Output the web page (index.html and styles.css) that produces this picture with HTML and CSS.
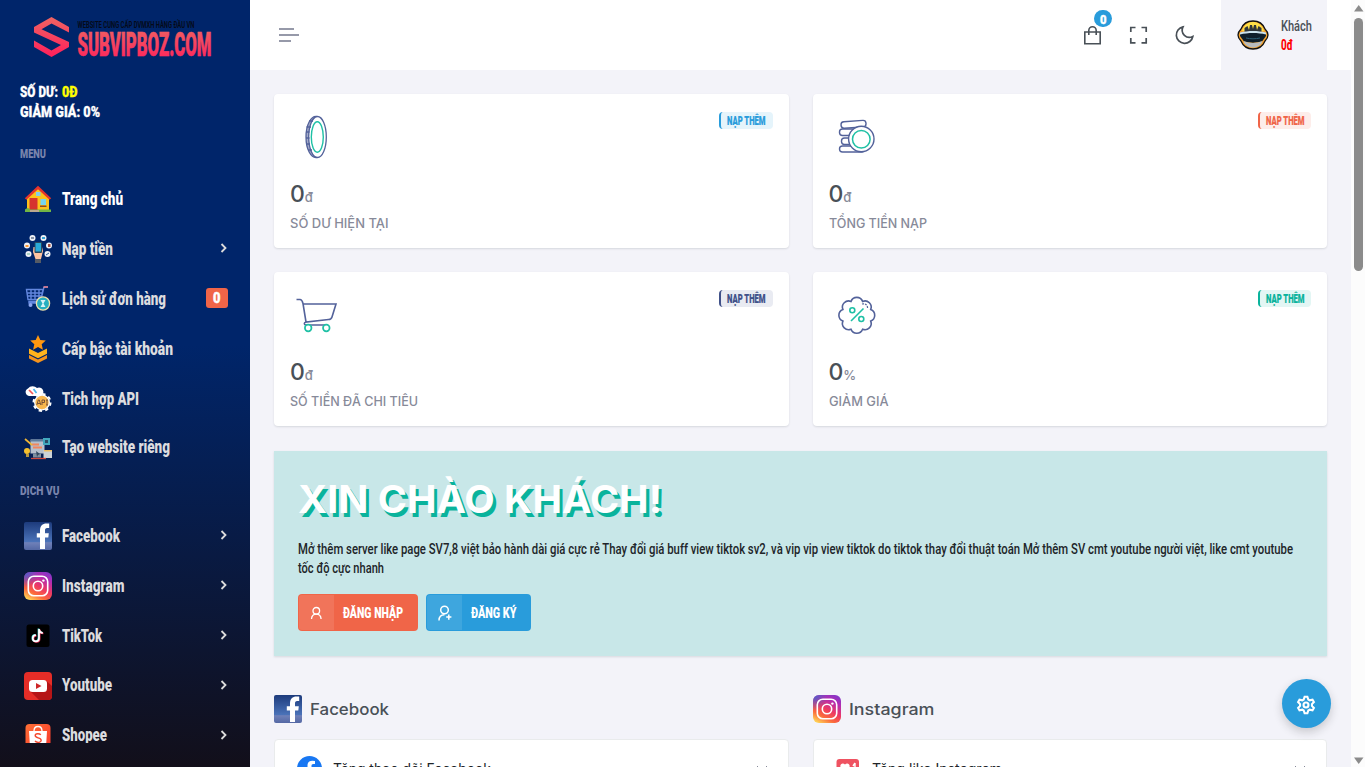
FILE: index.html
```html
<!DOCTYPE html>
<html lang="vi">
<head>
<meta charset="utf-8">
<title>SUBVIPBOZ.COM</title>
<link rel="stylesheet" href="styles.css">
</head>
<body>
<svg class="defs" width="0" height="0">
  <defs>
    <linearGradient id="red" x1="0" y1="0" x2="0" y2="1"><stop offset="0" stop-color="#ee6462"/><stop offset="1" stop-color="#ff1f5b"/></linearGradient>
    <linearGradient id="fbg" x1="0" y1="0" x2="0" y2="1"><stop offset="0" stop-color="#1d3b7c"/><stop offset=".7" stop-color="#4a72b8"/><stop offset=".74" stop-color="#6f80b8"/><stop offset="1" stop-color="#5468a4"/></linearGradient>
    <linearGradient id="igg" x1=".2" y1="1" x2=".75" y2="0"><stop offset="0" stop-color="#ffd155"/><stop offset=".25" stop-color="#fb6a3c"/><stop offset=".5" stop-color="#ee3a62"/><stop offset=".8" stop-color="#b52cb0"/><stop offset="1" stop-color="#8a35c6"/></linearGradient>
    <radialGradient id="igb" cx="0" cy="0" r=".55"><stop offset="0" stop-color="#3e62d8"/><stop offset="1" stop-color="#3e62d8" stop-opacity="0"/></radialGradient>
    <linearGradient id="shp" x1="0" y1="0" x2="1" y2="1"><stop offset="0" stop-color="#ff7035"/><stop offset="1" stop-color="#f8362c"/></linearGradient>
    <symbol id="fb" viewBox="0 0 28 28"><rect width="28" height="28" rx="2" fill="url(#fbg)"/><path d="M16 27V15.500h-3.200v-4.200H16V8.500C16 4 18.500 1.500 22.500 1.500h2.700v4.400h-2c-1.800 0-2.200.9-2.200 2.400v3h3.800l-.5 4.200H21V27z" fill="#fff"/></symbol>
    <symbol id="ig" viewBox="0 0 28 28"><rect width="28" height="28" rx="6" fill="url(#igg)"/><rect width="28" height="28" rx="6" fill="url(#igb)"/><g fill="none" stroke="#fff" stroke-width="1.600"><rect x="4.300" y="4.300" width="19.400" height="19.400" rx="5.500"/><circle cx="14" cy="14" r="4.700"/></g><circle cx="19.400" cy="8.600" r="1.200" fill="#fff"/></symbol>
    <symbol id="next" viewBox="0 0 8 10"><path d="M1.500 1l4 4-4 4" fill="none" stroke="#dcdcdc" stroke-width="1.800"/></symbol>
  </defs>
</svg>
<div class="app">
  <aside class="sidebar">
    <a class="logo">
      <svg width="180" height="42" viewBox="0 0 180 42">
        <path d="M18.500 1L36 11v5.500L18.500 7.500 8.500 13.200 36 26v5L18.500 41 1 31v-6.500l17.500 10 9.500-5.500L1 16.500V11z" fill="url(#red)"/>
        <text class="tagline" x="44.500" y="11.500" textLength="117" lengthAdjust="spacingAndGlyphs">WEBSITE CUNG CẤP DVMXH HÀNG ĐẦU VN</text>
        <text class="brand" x="44.500" y="39.500" textLength="134" lengthAdjust="spacingAndGlyphs" fill="url(#red)">SUBVIPBOZ.COM</text>
      </svg>
    </a>
    <div class="account">
      <svg class="line" width="90" height="20"><text y="15" textLength="38" lengthAdjust="spacingAndGlyphs">SỐ DƯ:</text><text class="yellow" x="42" y="15" textLength="15.500" lengthAdjust="spacingAndGlyphs">0Đ</text></svg>
      <svg class="line" width="90" height="20"><text y="15" textLength="80" lengthAdjust="spacingAndGlyphs">GIẢM GIÁ: 0%</text></svg>
    </div>
    <nav class="menu">
      <div class="title"><svg width="60" height="16"><text y="12" textLength="26" lengthAdjust="spacingAndGlyphs">MENU</text></svg></div>
      <a class="item active">
        <svg class="icon" viewBox="0 0 28 28"><path d="M3 12L14 2.500 25 12v13H3z" fill="#fdc21c"/><path d="M.8 13.200L14 .8l13.200 12.400-1.700 1.500L14 4.300 2.500 14.700z" fill="#e5342d"/><rect x="5.500" y="13" width="8" height="12" fill="#d6322e"/><rect x="16.500" y="14" width="5.500" height="6" fill="#77d4ed"/><path d="M16 20.500h6.500v1.500H16z" fill="#8b4b25"/><path d="M12 7h4.500v4H12z" fill="#83cbe8"/><path d="M1 24.500q3-3 5 0h21V27H1z" fill="#72b544"/><path d="M6 25h9v2H6z" fill="#bba88e"/></svg>
        <svg class="label" width="62" height="24"><text y="17.500" textLength="61" lengthAdjust="spacingAndGlyphs">Trang chủ</text></svg>
      </a>
      <a class="item">
        <svg class="icon" viewBox="0 0 28 28"><g fill="#eef1f6"><circle cx="8.500" cy="3" r="3"/><circle cx="19.500" cy="3" r="3"/><circle cx="3" cy="10.500" r="3"/><circle cx="25" cy="10.500" r="3"/><circle cx="4.500" cy="19" r="3"/><circle cx="23.500" cy="19" r="3"/></g><path d="M7 2h3v2H7z" fill="#8794a8"/><path d="M18 2h3v2h-3z" fill="#36a5d8"/><path d="M1.500 10h3v2h-3z" fill="#ff9830"/><path d="M24 9h2.500v3H24z" fill="#a64c3e"/><path d="M3 19h3" stroke="#67b48f"/><path d="M22 20l3-2" stroke="#275a9c"/><path d="M9.500 12l-.5 5 2.500 7h5.500l2-8-1-4z" fill="#ffc4a2"/><rect x="10.500" y="7" width="7.500" height="11" rx="1" fill="#29495e"/><rect x="11.500" y="8" width="5.500" height="8.500" fill="#28aad9"/><path d="M11 24h6v4h-6z" fill="#555b65"/></svg>
        <svg class="label" width="52" height="24"><text y="17.500" textLength="51" lengthAdjust="spacingAndGlyphs">Nạp tiền</text></svg>
        <svg class="next"><use href="#next"/></svg>
      </a>
      <a class="item">
        <svg class="icon" viewBox="0 0 28 28"><g fill="none" stroke="#6287de" stroke-width="1.400"><path d="M2.500 4.500H19l-2 10H4zM3 8h15.500M3.500 11h14M7 5v10M11 5v10M15 5v10M20 2l-3.500 14.500H5v1.500h8"/></g><path d="M19.500 2H24" stroke="#f08da0" stroke-width="1.600"/><circle cx="6.500" cy="20" r="2" fill="#8ba6ee"/><circle cx="19" cy="18.500" r="6.600" fill="#28afc0" stroke="#efe3ab" stroke-width="1.300"/><path d="M16.500 15h5l-2 3.500 2 3.500h-5l2-3.500z" fill="#d8f3f7"/></svg>
        <svg class="label" width="105" height="24"><text y="17.500" textLength="104" lengthAdjust="spacingAndGlyphs">Lịch sử đơn hàng</text></svg>
        <span class="count"><svg width="8" height="16"><text y="12.500" textLength="7.500" lengthAdjust="spacingAndGlyphs">0</text></svg></span>
      </a>
      <a class="item">
        <svg class="icon" viewBox="0 0 28 28"><path d="M14 0l2.300 5 5.500.6-4.100 3.700 1.200 5.500L14 12l-4.900 2.800 1.200-5.500-4.100-3.700 5.500-.6z" fill="#ff9811"/><path d="M5 13.500l9 4.500 9-4.500v5.300l-9 4.500-9-4.500z" fill="#ffb31d"/><path d="M5 20l9 4.500 9-4.500v3.500l-9 4.500-9-4.500z" fill="#f6931b"/></svg>
        <svg class="label" width="112" height="24"><text y="17.500" textLength="111" lengthAdjust="spacingAndGlyphs">Cấp bậc tài khoản</text></svg>
      </a>
      <a class="item">
        <svg class="icon" viewBox="0 0 28 28"><path d="M5 11a4 4 0 01-1-7.600A6 6 0 0113 3a4 4 0 014 7.900z" fill="#fff"/><path d="M5 5l4 4" stroke="#f25555" stroke-width="1.700"/><path d="M9.500 4l3 4" stroke="#4bb9ed" stroke-width="1.700"/><circle cx="18" cy="17.500" r="8.500" fill="none" stroke="#fff" stroke-width="2" stroke-dasharray="3.300 3.370"/><circle cx="18" cy="17.500" r="7.300" fill="#f7b74e" stroke="#fff" stroke-width="1.300"/><path d="M12.800 20l1.500-5h1l1.500 5M13.500 18.500h2.500M18 20v-5h2.500v2.500H18M22 15h2M23 15v5M22 20h2" fill="none" stroke="#6d4a36" stroke-width=".9"/></svg>
        <svg class="label" width="78" height="24"><text y="17.500" textLength="77" lengthAdjust="spacingAndGlyphs">Tich hợp API</text></svg>
      </a>
      <a class="item short">
        <svg class="icon" viewBox="0 0 28 28"><rect x="6.500" y="5.500" width="14" height="14" fill="#b7c1cc"/><path d="M7 5.500h13v2H7z" fill="#607f9f"/><path d="M8 9.500h7v2H8zM9 12.500h9v2H9z" fill="#f4865d"/><rect x="19" y="4" width="7" height="7" fill="#40a7bd"/><path d="M21 6h3v3h-3z" fill="#2d4c67"/><path d="M1 5l7 6" stroke="#efb536" stroke-width="1.700"/><circle cx="3" cy="17" r="3" fill="#f6c02d"/><path d="M2 20h3v3H2z" fill="#b8973d"/><path d="M9 19.500h8v4H9z" fill="#81909e"/><path d="M12 17l4 3-2 1-1 2z" fill="#33485e"/><rect x="19.500" y="16" width="8.500" height="8" fill="#ccd3d8"/><path d="M20 16h8v1.500h-8z" fill="#edbf64"/><path d="M7 24.500h15" stroke="#d14a3c" stroke-width="1.300"/></svg>
        <svg class="label" width="110" height="24"><text y="17" textLength="108" lengthAdjust="spacingAndGlyphs">Tạo website riêng</text></svg>
      </a>
      <div class="title services"><svg width="60" height="16"><text y="12" textLength="39.500" lengthAdjust="spacingAndGlyphs">DỊCH VỤ</text></svg></div>
      <a class="item"><svg class="icon"><use href="#fb"/></svg><svg class="label" width="60" height="24"><text y="17.500" textLength="58" lengthAdjust="spacingAndGlyphs">Facebook</text></svg><svg class="next"><use href="#next"/></svg></a>
      <a class="item"><svg class="icon"><use href="#ig"/></svg><svg class="label" width="64" height="24"><text y="17.500" textLength="62.500" lengthAdjust="spacingAndGlyphs">Instagram</text></svg><svg class="next"><use href="#next"/></svg></a>
      <a class="item">
        <svg class="icon" viewBox="0 0 28 28"><rect x="2.500" y="2.500" width="23" height="22.500" rx="2.500" fill="#000"/><g fill="none" stroke-width="1.700"><path d="M15 7v9.300a3.100 3.100 0 11-3.100-3.100M15 7.500c.3 2 1.700 3.200 3.800 3.500" stroke="#43dcd8" transform="translate(-.5 -.4)"/><path d="M15 7v9.300a3.100 3.100 0 11-3.100-3.100M15 7.500c.3 2 1.700 3.200 3.800 3.500" stroke="#ef315b" transform="translate(.6 .5)"/><path d="M15 7v9.300a3.100 3.100 0 11-3.100-3.100M15 7.500c.3 2 1.700 3.200 3.800 3.500" stroke="#fff"/></g></svg>
        <svg class="label" width="42" height="24"><text y="17.500" textLength="40" lengthAdjust="spacingAndGlyphs">TikTok</text></svg><svg class="next"><use href="#next"/></svg>
      </a>
      <a class="item">
        <svg class="icon" viewBox="0 0 28 28"><rect width="28" height="28" rx="4" fill="#e52d27"/><path d="M22.500 9L28 14v10a4 4 0 01-4 4h-9L6 19z" fill="#b51517"/><rect x="5" y="8" width="18" height="12" rx="3.500" fill="#fff"/><path d="M12 11v6l5.500-3z" fill="#ce2627"/></svg>
        <svg class="label" width="52" height="24"><text y="17" textLength="50" lengthAdjust="spacingAndGlyphs">Youtube</text></svg><svg class="next"><use href="#next"/></svg>
      </a>
      <a class="item">
        <svg class="icon" viewBox="0 0 28 28"><rect x="1.500" y="2" width="25" height="25" rx="4" fill="url(#shp)"/><path d="M5 9h18l-1 16H6z" fill="#fff"/><path d="M10 9c0-6 8-6 8 0" fill="none" stroke="#fff" stroke-width="1.300"/><path d="M16.800 12.800c-1.500-1.600-5.600-1.500-5.600.8 0 2.800 6 1.800 6 4.700 0 2.500-4.300 2.700-6.200.8" fill="none" stroke="#f4492e" stroke-width="1.400"/></svg>
        <svg class="label" width="47" height="24"><text y="17" textLength="45" lengthAdjust="spacingAndGlyphs">Shopee</text></svg><svg class="next"><use href="#next"/></svg>
      </a>
    </nav>
  </aside>
  <div class="page">
    <header class="topbar">
      <svg class="burger" width="20" height="14"><path d="M0 1h15M0 7h20M0 13h12" stroke="#74788d" stroke-width="1.600"/></svg>
      <div class="tools">
        <span class="bag"><svg width="22" height="22" viewBox="0 0 22 22" fill="none" stroke="#495057" stroke-width="1.600"><path d="M3.800 8h15.400v11.700H3.800zM7.800 11V6.500a3.700 3.700 0 017.400 0V11"/></svg><span class="dot"><svg width="7" height="14"><text y="11.500" textLength="6.500" lengthAdjust="spacingAndGlyphs">0</text></svg></span></span>
        <svg width="22" height="22" viewBox="0 0 22 22" fill="none" stroke="#495057" stroke-width="1.700"><path d="M8.500 3.500H3.800V8M14.500 3.500h4.700V8M8.500 18.800H3.800V14M14.500 18.800h4.700V14"/></svg>
        <svg width="22" height="22" viewBox="0 0 22 22" fill="none" stroke="#495057" stroke-width="1.700"><path d="M10 2.900a7.200 7.200 0 009.800 9.600A8.300 8.300 0 1110 2.900z"/></svg>
      </div>
      <div class="user">
        <svg width="32" height="30" viewBox="0 0 32 30"><path d="M16 1c6 0 10 3 12 8 2 2 3 4 3 6s-1 4-3 6c-2 5-6 8-12 8s-10-3-12-8c-2-2-3-4-3-6s1-4 3-6C6 4 10 1 16 1z" fill="#f5a32d" stroke="#111" stroke-width="1.300"/><path d="M5 11C7 4 12 2 16 2s9 2 11 9z" fill="#ffe047"/><path d="M7.500 12V8l3-2 1.500 4 1-5h2l1 4 1-4h2l1 5 1.500-4 3 2v4z" fill="#30363a"/><path d="M3 13c8-2.500 18-2.500 26 0v3l-4 5.500c-6 1.500-12 1.500-18 0L3 16z" fill="#0e1f2c"/><path d="M3 12.500c8-2 18-2 26 0v2c-8-2-18-2-26 0z" fill="#cae2ed"/><path d="M9 18c4 1 10 1 14 0" stroke="#2e6178"/><path d="M6.500 21c6 2.500 13 2.500 19 0-1 4-5 6.500-9.500 6.500S7.500 25 6.500 21z" fill="#b8bcbf"/></svg>
        <div class="who">
          <svg width="32" height="19"><text y="15" textLength="31" lengthAdjust="spacingAndGlyphs">Khách</text></svg>
          <svg class="money" width="32" height="19"><text y="15" textLength="12" lengthAdjust="spacingAndGlyphs">0đ</text></svg>
        </div>
      </div>
    </header>
    <main class="content">
      <section class="stats">
        <article class="card blue">
          <div class="top"><svg class="art" viewBox="0 0 52 52"><path d="M27 6.500c-6-1-11 8-11 20.500S21 48.500 27 47.500c-5-2-8-9-8-20.500s3-19 8-20.500z" fill="#a5abc9"/><g fill="none" stroke="#53629a" stroke-width="1.300"><ellipse cx="27.500" cy="27" rx="8.800" ry="20.500"/><path d="M27 6.500c-6-1-11 8-11 20.500S21 48.500 27 47.500"/><path d="M16 22h3.500M16 28h3.500M16.500 34h3.500M18 40h4M16.500 17H21M19 11h4"/></g><ellipse cx="27.300" cy="27" rx="6" ry="15.300" fill="none" stroke="#1fc0a5" stroke-width="1.400"/></svg>
          <a class="add"><svg width="39" height="15"><text y="12.500" textLength="38.500" lengthAdjust="spacingAndGlyphs">NẠP THÊM</text></svg></a></div>
          <p class="num">0<small>đ</small></p>
          <svg class="name" width="140" height="20"><text y="15" textLength="98.500" lengthAdjust="spacingAndGlyphs">SỐ DƯ HIỆN TẠI</text></svg>
        </article>
        <article class="card red">
          <div class="top"><svg class="art" viewBox="0 0 52 52"><g fill="#fff" stroke="#53629a" stroke-width="1.400"><rect x="10.500" y="36" width="25" height="6" rx="3"/><rect x="12.500" y="28" width="20" height="6.500" rx="3"/><rect x="10.500" y="19" width="24" height="6.500" rx="3"/><rect x="12" y="11" width="25" height="6.500" rx="3" transform="rotate(-4 25 14)"/><circle cx="32.300" cy="29" r="12.700"/></g><circle cx="32.300" cy="29.300" r="8.800" fill="none" stroke="#1fc0a5" stroke-width="1.500"/></svg>
          <a class="add"><svg width="39" height="15"><text y="12.500" textLength="38.500" lengthAdjust="spacingAndGlyphs">NẠP THÊM</text></svg></a></div>
          <p class="num">0<small>đ</small></p>
          <svg class="name" width="140" height="20"><text y="15" textLength="98" lengthAdjust="spacingAndGlyphs">TỔNG TIỀN NẠP</text></svg>
        </article>
        <article class="card navy">
          <div class="top"><svg class="art" viewBox="0 0 52 52"><path d="M6.500 11.500H10c2 0 2.500 2 3 4L16 34l22.500-2.500c2 0 3-.8 3.500-2.500l4-13H13.500M16 34c-2.500.5-2 3 0 3h22" fill="none" stroke="#53629a" stroke-width="1.600"/><g fill="#fff" stroke="#1fc0a5" stroke-width="1.700"><circle cx="18.200" cy="40" r="3.300"/><circle cx="36.300" cy="40" r="3.300"/></g></svg>
          <a class="add"><svg width="39" height="15"><text y="12.500" textLength="38.500" lengthAdjust="spacingAndGlyphs">NẠP THÊM</text></svg></a></div>
          <p class="num">0<small>đ</small></p>
          <svg class="name strong" width="140" height="20"><text y="15" textLength="128" lengthAdjust="spacingAndGlyphs">SỐ TIỀN ĐÃ CHI TIÊU</text></svg>
        </article>
        <article class="card green">
          <div class="top"><svg class="art" viewBox="0 0 52 52"><path transform="translate(-.7 .8)" d="M22.700 12.600a6.200 6.200 0 0111.600 0 6.200 6.200 0 018.100 8.100 6.200 6.200 0 010 11.600 6.200 6.200 0 01-8.100 8.100 6.200 6.200 0 01-11.600 0 6.200 6.200 0 01-8.100-8.100 6.200 6.200 0 010-11.600 6.200 6.200 0 018.100-8.100z" fill="none" stroke="#53629a" stroke-width="1.600"/><path d="M33 16c3.500-1 6 1.500 5.500 5" fill="none" stroke="#53629a" stroke-width="1.200" stroke-dasharray="2 1"/><g fill="none" stroke="#1fc0a5" stroke-width="1.600"><path d="M22 33L34.500 20.500"/><circle cx="23.300" cy="22.300" r="2.500"/><circle cx="32.300" cy="31" r="2.500"/></g></svg>
          <a class="add"><svg width="39" height="15"><text y="12.500" textLength="38.500" lengthAdjust="spacingAndGlyphs">NẠP THÊM</text></svg></a></div>
          <p class="num">0<small>%</small></p>
          <svg class="name strong" width="140" height="20"><text y="15" textLength="59.500" lengthAdjust="spacingAndGlyphs">GIẢM GIÁ</text></svg>
        </article>
      </section>
      <section class="hello">
        <svg class="headline" width="370" height="50"><text y="38" textLength="364" lengthAdjust="spacingAndGlyphs">XIN CHÀO KHÁCH!</text></svg>
        <svg class="note" width="1000" height="38"><text y="15" textLength="995" lengthAdjust="spacingAndGlyphs">Mở thêm server like page SV7,8 việt bảo hành dài giá cực rẻ Thay đổi giá buff view tiktok sv2, và vip vip view tiktok do tiktok thay đổi thuật toán Mở thêm SV cmt youtube người việt, like cmt youtube</text><text y="34" textLength="86" lengthAdjust="spacingAndGlyphs">tốc độ cực nhanh</text></svg>
        <div class="actions">
          <a class="btn login"><span class="pic"><svg width="14" height="14" viewBox="0 0 14 14" fill="none" stroke="#fff" stroke-width="1.300"><circle cx="6.300" cy="4.800" r="3.300"/><path d="M1.500 13c.2-3.300 2-4.900 4.800-4.900s4.600 1.600 4.800 4.900"/></svg></span><svg width="61" height="18"><text y="14" textLength="60" lengthAdjust="spacingAndGlyphs">ĐĂNG NHẬP</text></svg></a>
          <a class="btn signup"><span class="pic"><svg width="16" height="16" viewBox="0 0 16 16" fill="none" stroke="#fff" stroke-width="1.500"><circle cx="7.500" cy="5" r="3.800"/><path d="M2 15.500c0-3.600 2-5.800 5.500-5.800M11.800 9.500v5.200M9.200 12.100h5.200"/></svg></span><svg width="47" height="18"><text y="14" textLength="45.500" lengthAdjust="spacingAndGlyphs">ĐĂNG KÝ</text></svg></a>
        </div>
      </section>
      <section class="groups">
        <div class="group">
          <h5><svg class="mark"><use href="#fb"/></svg><svg class="gname" width="90" height="24"><text y="18" textLength="79" lengthAdjust="spacingAndGlyphs">Facebook</text></svg></h5>
          <div class="list"><svg class="service" width="25" height="25" viewBox="0 0 25 25"><circle cx="12.500" cy="12.500" r="12.500" fill="#1877f2"/><path d="M10.500 25v-9H7.300v-3.700h3.200V9.600c0-3.200 1.900-4.900 4.800-4.900l2.700.2v3.200h-1.500c-1.600 0-2 .9-2 1.900v2.300H18l-.6 3.700h-2.900v9z" fill="#fff"/></svg><svg class="sname" width="160" height="24"><text y="17" textLength="158" lengthAdjust="spacingAndGlyphs">Tăng theo dõi Facebook</text></svg><svg class="down" width="12" height="8"><path d="M1 1l5 5 5-5"/></svg></div>
        </div>
        <div class="group">
          <h5><svg class="mark"><use href="#ig"/></svg><svg class="gname" width="90" height="24"><text y="18" textLength="85.500" lengthAdjust="spacingAndGlyphs">Instagram</text></svg></h5>
          <div class="list"><svg class="service" width="25" height="25" viewBox="0 0 25 25"><rect x=".5" y="3" width="22.500" height="22" rx="3" fill="#ef5261"/><path d="M9 15.500L4.500 11C3.500 8 7 6.500 9 8.500c2-2 5.500-.5 4.500 2.500z" fill="#fff"/><path d="M19 7v6M17 10l2-3" stroke="#fff" stroke-width="1.400"/></svg><svg class="sname" width="160" height="24"><text y="17" textLength="130" lengthAdjust="spacingAndGlyphs">Tăng like Instagram</text></svg><svg class="down" width="12" height="8"><path d="M1 1l5 5 5-5"/></svg></div>
        </div>
      </section>
    </main>
  </div>
  <div class="scroll"><svg width="14" height="767"><path d="M3 11.500h9.500L7.700 5z" fill="#8b8b8b"/><rect x="3" y="18" width="9" height="253" rx="4.500" fill="#8b8b8b"/><path d="M3 757.500h9.500L7.700 764z" fill="#8b8b8b"/></svg></div>
  <button class="gear"><svg width="22" height="22" viewBox="0 0 24 24" fill="none" stroke="#fff" stroke-width="2.300"><path d="M9.500 6L10.500 3h3l1 3 1.500.9 3.100-.7 1.500 2.600L18.500 11v2l2.100 2.200-1.500 2.600-3.100-.7-1.500.9-1 3h-3l-1-3-1.500-.9-3.100.7-1.500-2.600L5.500 13v-2L3.400 8.800l1.500-2.600 3.100.7z"/><circle cx="12" cy="12" r="2.700"/></svg></button>
</div>
</body>
</html>
```
FILE: styles.css
```css
* { box-sizing: border-box; }
body { margin: 0; overflow: hidden; background: #f3f3f9; font-family: Roboto, "Noto Sans", sans-serif; }
svg { display: block; flex: none; overflow: visible; }
.defs { position: absolute; }
.app { display: flex; height: 767px; overflow: hidden; }

/* Sidebar */
.sidebar { width: 250px; height: 767px; padding: 16px 0 24px; display: flex; flex-direction: column; background: linear-gradient(#00256a 45%, #120f1a 100%); }
.logo { padding-left: 33px; height: 66px; flex: none; }
.tagline { font-size: 9.5px; font-weight: 700; fill: #050a18; }
.brand { font-size: 32.500px; font-weight: 900; stroke: url(#red); stroke-width: .6px; }
.account { padding-left: 20px; flex: none; }
.account text { font-size: 14.5px; font-weight: 900; fill: #fff; stroke: #fff; stroke-width: .3px; }
.account .yellow { fill: #ff0; stroke: #ff0; }
.menu { flex: 1; min-height: 0; overflow: hidden; padding-top: 24px; }
.title { height: 28px; padding-left: 20px; }
.title text { font-size: 12.5px; font-weight: 900; fill: #7984ac; }
.services { height: 40px; padding-top: 12px; }
.item { display: flex; align-items: center; height: 50px; padding: 0 22px 0 24px; gap: 10px; }
.short { height: 47px; }
.icon { width: 28px; height: 28px; }
.label text { font-size: 18.2px; font-weight: 900; fill: #dcdcdf; }
.active .label text { fill: #fff; }
.next { width: 8px; height: 10px; margin: 0 0 2px auto; }
.count { margin-left: auto; margin-bottom: 2px; width: 22px; height: 20px; border-radius: 3px; background: #f06548; display: flex; align-items: center; justify-content: center; }
.count text { font-size: 14.5px; font-weight: 900; fill: #fff; stroke: #fff; stroke-width: .4px; }

/* Header */
.page { width: 1101px; overflow: hidden; }
.topbar { height: 70px; background: #fff; display: flex; align-items: center; padding: 0 24px 0 29px; }
.tools { display: flex; gap: 24px; margin-left: auto; margin-right: 26px; }
.bag { position: relative; }
.dot { position: absolute; left: 13px; top: -14px; width: 18px; height: 17px; border-radius: 9px; background: #299cdb; display: flex; align-items: center; justify-content: center; }
.dot text { font-size: 13px; font-weight: 900; fill: #fff; stroke: #fff; stroke-width: .4px; }
.user { width: 106px; height: 70px; background: #f3f3f9; display: flex; align-items: center; gap: 12px; padding-left: 16px; }
.who text { font-size: 14.5px; font-weight: 500; fill: #495057; }
.who .money text { font-weight: 800; fill: #f00; }

/* Stat cards */
.content { padding: 24px; }
.stats { display: grid; grid-template-columns: 1fr 1fr; gap: 24px; }
.card { height: 154px; background: #fff; border-radius: 4px; padding: 16px; box-shadow: 0 1px 2px rgba(56, 65, 74, .15); }
.top { display: flex; justify-content: space-between; align-items: flex-start; height: 68px; }
.art { width: 52px; height: 52px; }
.add { width: 53.5px; height: 17px; margin-top: 2px; padding-left: 6px; border-left: 2px solid; border-radius: 4px; }
.add text { font-size: 12px; font-weight: 900; fill: currentColor; stroke: currentColor; stroke-width: .2px; }
.blue .add { color: #299cdb; background: #e5f4fb; }
.red .add { color: #f06548; background: #fdedea; }
.navy .add { color: #405189; background: #e9ebf2; }
.green .add { color: #0ab39c; background: #e3f6f4; }
.num { margin: 0; height: 35px; line-height: 32px; font-family: Inter, sans-serif; font-size: 23px; font-weight: 500; color: #495057; }
.num small { font-size: 13px; font-weight: 500; color: #878a99; }
.name text { font-family: Inter, sans-serif; font-size: 12.8px; font-weight: 450; fill: #878a99; }
.name.strong text { font-weight: 500; }

/* Greeting */
.hello { height: 205px; margin-top: 25px; padding: 24px; background: #c8e7e8; box-shadow: 0 1px 2px rgba(56, 65, 74, .15); }
.headline text { font-family: Inter, sans-serif; font-size: 38.500px; font-weight: 700; fill: #fff; text-shadow: 3px 4px 0 #0ab39c; }
.note { margin-top: 14px; }
.note text { font-size: 14.5px; font-weight: 500; fill: #212529; }
.actions { display: flex; gap: 8px; margin-top: 17px; }
.btn { height: 37px; border-radius: 4px; display: flex; align-items: center; gap: 9px; }
.btn text { font-size: 15px; font-weight: 900; fill: #fff; }
.pic { width: 35px; height: 35px; margin-left: 1px; display: flex; align-items: center; justify-content: center; background: rgba(255, 255, 255, .1); border-radius: 3px 0 0 3px; }
.login { width: 120px; background: #f06548; }
.signup { width: 105px; background: #299cdb; }

/* Service groups */
.groups { display: grid; grid-template-columns: 1fr 1fr; gap: 24px; padding-top: 39px; }
h5 { margin: 0 0 16px; display: flex; align-items: center; gap: 8px; }
.mark { width: 28px; height: 28px; }
.gname text { font-family: Inter, sans-serif; font-size: 15.8px; font-weight: 550; fill: #495057; }
.list { height: 60px; background: #fff; border: 1px solid #e9ebec; border-radius: 4px; display: flex; align-items: center; padding: 0 20px 0 22px; }
.service { margin-top: -2px; }
.sname { margin-left: 11px; }
.sname text { font-family: Inter, sans-serif; font-size: 14px; fill: #212529; }
.down { margin-left: auto; fill: none; stroke: #878a99; }

.scroll { width: 14px; background: #fcfcfc; }
.gear { position: absolute; left: 1282px; top: 679px; width: 49px; height: 49px; padding: 2px 1px 0 0; border: 0; border-radius: 50%; background: #299cdb; display: flex; align-items: center; justify-content: center; box-shadow: 0 4px 10px rgba(30, 32, 37, .2); }
```
